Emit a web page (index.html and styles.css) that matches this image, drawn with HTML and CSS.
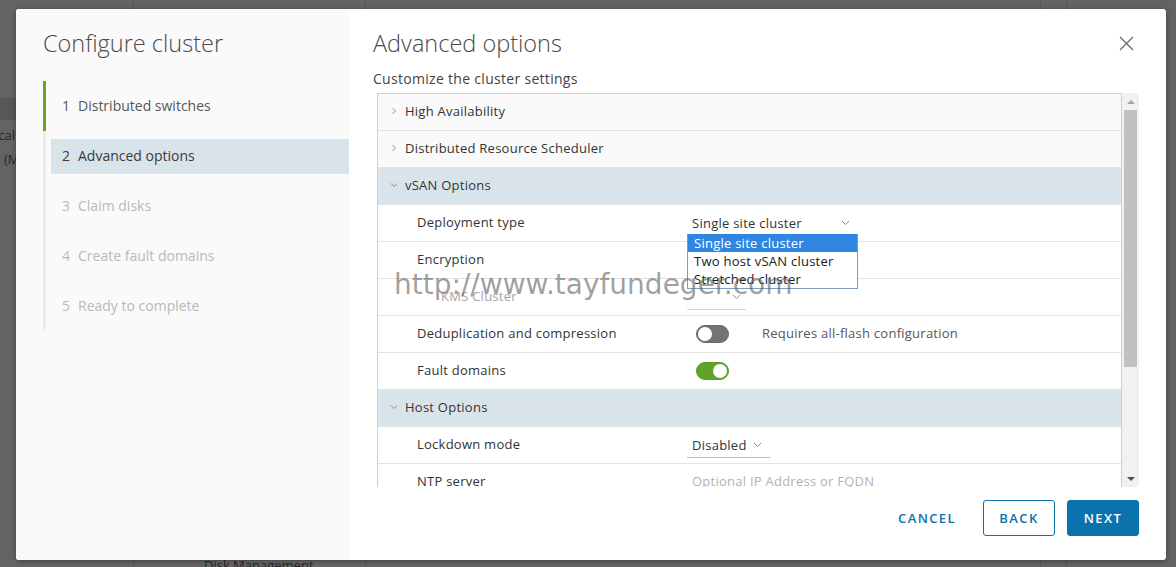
FILE: index.html
```html
<!DOCTYPE html>
<html>
  <head>
    <title>Configure cluster</title>
    <meta charset="utf-8" />
    <meta name="viewport" content="width=device-width, initial-scale=1.0" />
    <link rel="stylesheet" href="styles.css">
  </head>
  <body>
    <!-- dimmed page behind the dialog -->
    <div class="backdrop">
      <div class="bg_col bg_col_side">
        <div class="bg_band"></div>
        <p class="bg_text">ical</p>
        <p class="bg_text bg_text_sub">(M</p>
      </div>
      <div class="bg_col bg_col_main">
        <p class="bg_text bg_text_bottom">Disk Management</p>
      </div>
      <div class="bg_col bg_col_wide"></div>
      <div class="bg_col bg_col_narrow"></div>
      <div class="bg_col bg_col_rest"></div>
    </div>

    <div class="modal">
      <nav class="wizard_nav">
        <h1 class="wizard_title">Configure cluster</h1>
        <ul class="steps">
          <li class="step step_done"><span class="step_item"><span class="step_num">1</span>Distributed switches</span></li>
          <li class="step step_current"><span class="step_item"><span class="step_num">2</span>Advanced options</span></li>
          <li class="step step_disabled"><span class="step_item"><span class="step_num">3</span>Claim disks</span></li>
          <li class="step step_disabled"><span class="step_item"><span class="step_num">4</span>Create fault domains</span></li>
          <li class="step step_disabled"><span class="step_item"><span class="step_num">5</span>Ready to complete</span></li>
        </ul>
      </nav>

      <section class="wizard_body">
        <div class="body_head">
          <h2 class="page_title">Advanced options</h2>
          <button class="close_button" aria-label="Close">
            <svg width="15" height="15" viewBox="0 0 15 15">
              <path d="M1 1 L14 14 M14 1 L1 14" stroke="#6f6f6f" stroke-width="1.4" fill="none" />
            </svg>
          </button>
        </div>
        <p class="subtitle">Customize the cluster settings</p>

        <div class="stack_wrap">
          <div class="stack">
            <div class="stack_row stack_header">
              <svg class="chevron" width="8" height="8" viewBox="0 0 8 8"><path d="M2.5 1 L5.5 4 L2.5 7" /></svg>
              <span>High Availability</span>
            </div>
            <div class="stack_row stack_header">
              <svg class="chevron" width="8" height="8" viewBox="0 0 8 8"><path d="M2.5 1 L5.5 4 L2.5 7" /></svg>
              <span>Distributed Resource Scheduler</span>
            </div>
            <div class="stack_row stack_header stack_open">
              <svg class="chevron" width="8" height="8" viewBox="0 0 8 8"><path d="M1 2.5 L4 5.5 L7 2.5" /></svg>
              <span>vSAN Options</span>
            </div>
            <div class="stack_row stack_child">
              <span class="stack_label">Deployment type</span>
              <div class="select select_focus select_deploy">
                <span>Single site cluster</span>
                <svg class="select_arrow" width="9" height="6" viewBox="0 0 9 6"><path d="M1 1 L4.5 4.5 L8 1" /></svg>
                <ul class="dropdown">
                  <li class="dropdown_item dropdown_active">Single site cluster</li>
                  <li class="dropdown_item">Two host vSAN cluster</li>
                  <li class="dropdown_item">Stretched cluster</li>
                </ul>
              </div>
            </div>
            <div class="stack_row stack_child">
              <span class="stack_label">Encryption</span>
            </div>
            <div class="stack_row stack_child">
              <span class="stack_label stack_label_sub">KMS Cluster</span>
              <div class="select select_disabled select_kms">
                <span></span>
                <svg class="select_arrow" width="9" height="6" viewBox="0 0 9 6"><path d="M1 1 L4.5 4.5 L8 1" /></svg>
              </div>
            </div>
            <div class="stack_row stack_child">
              <span class="stack_label">Deduplication and compression</span>
              <span class="toggle"></span>
              <span class="hint">Requires all-flash configuration</span>
            </div>
            <div class="stack_row stack_child">
              <span class="stack_label">Fault domains</span>
              <span class="toggle toggle_on"></span>
            </div>
            <div class="stack_row stack_header stack_open">
              <svg class="chevron" width="8" height="8" viewBox="0 0 8 8"><path d="M1 2.5 L4 5.5 L7 2.5" /></svg>
              <span>Host Options</span>
            </div>
            <div class="stack_row stack_child">
              <span class="stack_label">Lockdown mode</span>
              <div class="select select_lock">
                <span>Disabled</span>
                <svg class="select_arrow" width="9" height="6" viewBox="0 0 9 6"><path d="M1 1 L4.5 4.5 L8 1" /></svg>
              </div>
            </div>
            <div class="stack_row stack_child">
              <span class="stack_label">NTP server</span>
              <span class="placeholder">Optional IP Address or FQDN</span>
            </div>
          </div>
          <div class="scrollbar">
            <div class="scroll_btn"><span class="scroll_up"></span></div>
            <div class="scroll_track"><div class="scroll_thumb"></div></div>
            <div class="scroll_btn"><span class="scroll_down"></span></div>
          </div>
        </div>

        <div class="footer">
          <button class="btn btn_flat">CANCEL</button>
          <button class="btn btn_outline">BACK</button>
          <button class="btn btn_primary">NEXT</button>
        </div>

        <div class="watermark">http://www.tayfundeger.com</div>
      </section>
    </div>
  </body>
</html>
```

FILE: styles.css
```css
body {
  margin: 0;
  padding: 0;
  width: 1176px;
  height: 567px;
  overflow: hidden;
  position: relative;
  background-color: #636363;
  font-family: "Open Sans", Arial, sans-serif;
}
p,
h1,
h2,
ul {
  margin: 0;
  padding: 0;
}

/* backdrop */

.backdrop {
  display: flex;
  height: 567px;
}
.bg_col {
  border-right: 1px solid #585858;
}
.bg_col_side {
  width: 133px;
}
.bg_col_main {
  width: 231px;
}
.bg_col_wide {
  width: 674px;
}
.bg_col_narrow {
  width: 25px;
}
.bg_col_rest {
  flex: 1;
  border-right: 0;
}
.bg_band {
  height: 22px;
  margin-top: 98px;
  background-color: #575757;
}
.bg_text {
  font-size: 13px;
  color: #262626;
  margin: 5px 0 0 -5px;
  line-height: 20px;
}
.bg_text_sub {
  margin: 4px 0 0 4px;
}
.bg_text_bottom {
  margin: 555px 0 0 70px;
}

/* dialog */

.modal {
  position: absolute;
  left: 16px;
  top: 9px;
  width: 1150px;
  height: 551px;
  display: flex;
  background-color: #fff;
  border-radius: 3px;
  overflow: hidden;
  box-shadow: 0 1px 4px rgba(0, 0, 0, 0.35);
}

.wizard_nav {
  width: 333px;
  background-color: #fafafa;
}
.wizard_title {
  font-size: 23.5px;
  font-weight: 300;
  line-height: 28px;
  color: #4a4a4a;
  padding: 20px 0 0 27px;
}
.steps {
  list-style: none;
  margin: 24px 0 0 27px;
  border-left: 3px solid #ececec;
}
.step {
  height: 50px;
  display: flex;
  align-items: center;
  margin-left: -3px;
  border-left: 3px solid transparent;
  font-size: 14px;
  color: #565656;
}
.step_done {
  border-left-color: #62a92a;
}
.step_item {
  flex: 1;
  height: 35px;
  box-sizing: border-box;
  padding: 0 0 2px 11px;
  margin-left: 5px;
  display: flex;
  align-items: center;
}
.step_current .step_item {
  background-color: #d9e4ea;
  color: #3a3a3a;
}
.step_disabled {
  color: #b9b9b9;
}
.step_num {
  margin-right: 8px;
}

.wizard_body {
  flex: 1;
  position: relative;
  padding-left: 24px;
}
.body_head {
  display: flex;
  justify-content: space-between;
  align-items: center;
  padding: 20px 32px 0 0;
}
.page_title {
  font-size: 23.5px;
  font-weight: 300;
  line-height: 28px;
  color: #4a4a4a;
}
.close_button {
  background-color: transparent;
  border: 0;
  padding: 0;
  width: 15px;
  height: 15px;
  display: flex;
}
.subtitle {
  margin-top: 12px;
  font-size: 14px;
  line-height: 20px;
  letter-spacing: 0.3px;
  color: #444;
}

/* stack view */

.stack_wrap {
  display: flex;
  margin: 4px 27px 0 4px;
  height: 394px;
}
.stack {
  flex: 1;
  border: 1px solid #cfcfcf;
  border-bottom: 0;
  overflow: hidden;
}
.stack_row {
  height: 37px;
  box-sizing: border-box;
  padding-bottom: 2px;
  border-bottom: 1px solid #e2e2e2;
  display: flex;
  align-items: center;
  font-size: 13px;
  letter-spacing: 0.25px;
  color: #333;
}
.stack_header {
  background-color: #fafafa;
  padding-left: 12px;
}
.stack_header .chevron {
  margin-right: 7px;
}
.stack_open {
  background-color: #d9e4ea;
}
.chevron path,
.select_arrow path {
  stroke: #8d8d8d;
  stroke-width: 1;
  fill: none;
}
.stack_child {
  padding-left: 39px;
}
.stack_label {
  width: 270px;
  flex-shrink: 0;
}
.stack_label_sub {
  padding-left: 24px;
  width: 246px;
  color: #a5a5a5;
}

.select {
  position: relative;
  height: 24px;
  box-sizing: border-box;
  border-bottom: 1px solid #bdbdbd;
  display: flex;
  align-items: center;
  justify-content: space-between;
  padding: 0 8px 0 5px;
  margin-top: 3px;
}
.select_deploy {
  width: 171px;
}
.select_focus {
  border-bottom: 2px solid #2a7bbf;
}
.select_kms {
  width: 59px;
  padding-right: 5px;
  border-bottom-color: #d6d6d6;
}
.select_lock {
  width: 83px;
}
.dropdown {
  position: absolute;
  top: 100%;
  left: 0;
  width: 171px;
  box-sizing: border-box;
  list-style: none;
  background-color: #fff;
  border: 1px solid #7f9cc0;
  border-top: 0;
  z-index: 2;
}
.dropdown_item {
  height: 18px;
  line-height: 18px;
  padding-left: 6px;
  font-size: 13px;
  color: #1a1a1a;
}
.dropdown_active {
  background-color: #2f86e0;
  color: #fff;
}

.toggle {
  width: 33px;
  height: 18px;
  box-sizing: border-box;
  border-radius: 9px;
  background-color: #737373;
  border: 1px solid #6a6a6a;
  margin: 2px 0 0 9px;
  position: relative;
}
.toggle::after {
  content: "";
  position: absolute;
  top: 1px;
  left: 1px;
  width: 14px;
  height: 14px;
  border-radius: 50%;
  background-color: #fff;
}
.toggle_on {
  background-color: #5fa32a;
  border-color: #5a9c27;
}
.toggle_on::after {
  left: auto;
  right: 1px;
}
.hint {
  margin-left: 33px;
  color: #565656;
}
.placeholder {
  margin-left: 5px;
  color: #b3b3b3;
}

/* scrollbar */

.scrollbar {
  width: 17px;
  background-color: #f1f1f1;
  display: flex;
  flex-direction: column;
}
.scroll_btn {
  height: 17px;
  display: flex;
  align-items: center;
  justify-content: center;
}
.scroll_up {
  border-left: 4px solid transparent;
  border-right: 4px solid transparent;
  border-bottom: 4px solid #a3a3a3;
}
.scroll_down {
  border-left: 4px solid transparent;
  border-right: 4px solid transparent;
  border-top: 4px solid #505050;
}
.scroll_track {
  flex: 1;
  padding: 0 2px;
}
.scroll_thumb {
  height: 257px;
  background-color: #c1c1c1;
}

/* footer */

.footer {
  display: flex;
  justify-content: flex-end;
  align-items: center;
  margin: 13px 27px 0 0;
}
.btn {
  height: 36px;
  box-sizing: border-box;
  font-family: "Open Sans", Arial, sans-serif;
  font-size: 13px;
  font-weight: 600;
  letter-spacing: 1.4px;
  border-radius: 3px;
  padding: 0 12px;
  background-color: transparent;
  border: 1px solid transparent;
  color: #0b72ad;
}
.btn_flat {
  margin-right: 14px;
}
.btn_outline {
  width: 72px;
  border-color: #0b72ad;
  margin-right: 12px;
}
.btn_primary {
  width: 72px;
  background-color: #0b72ad;
  border-color: #0b72ad;
  color: #fff;
}

.watermark {
  position: absolute;
  left: 45px;
  top: 260px;
  font-family: "DejaVu Sans", Arial, sans-serif;
  font-size: 28px;
  line-height: 32px;
  color: rgba(95, 95, 95, 0.6);
  z-index: 3;
  white-space: nowrap;
}
```
